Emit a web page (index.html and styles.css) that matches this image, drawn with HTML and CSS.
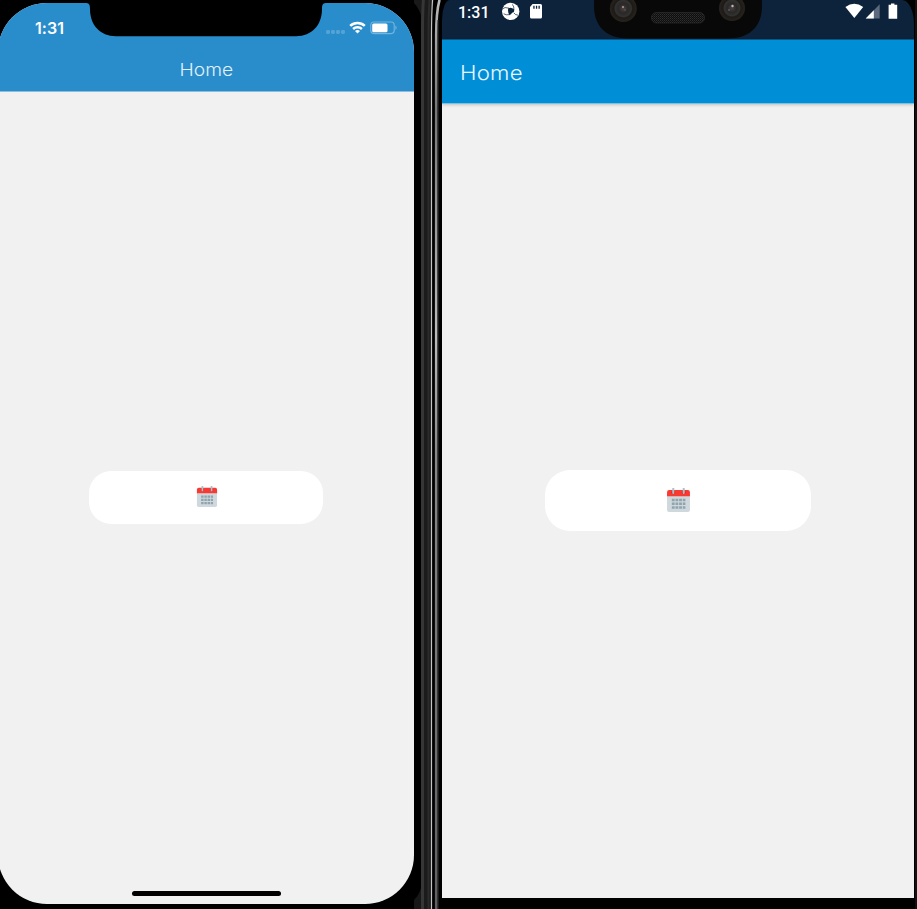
FILE: index.html
```
<!DOCTYPE html>
<html lang="en">
<head>
<meta charset="utf-8">
<title>Home</title>
<link rel="stylesheet" href="styles.css">
</head>
<body>
<svg class="symbols" width="0" height="0">
  <symbol id="calendar" viewBox="0 0 24 24">
    <path d="M1 6h22v15a2 2 0 0 1-2 2H3a2 2 0 0 1-2-2z" fill="#cfd8dc"/>
    <path d="M1 8V4a2 2 0 0 1 2-2h18a2 2 0 0 1 2 2v4z" fill="#f93a32"/>
    <circle cx="7" cy="4" r="1.8" fill="#c82828"/><circle cx="17" cy="4" r="1.8" fill="#c82828"/>
    <path d="M7 .8v4M17 .8v4" stroke="#b0bec5" stroke-width="2" stroke-linecap="round"/>
    <path d="M5.6 11.5h13M5.6 15.1h13M5.6 18.7h13" stroke="#90a4ae" stroke-width="2.5" stroke-dasharray="2.7 .8"/>
  </symbol>
</svg>
<main class="desktop">
  <section class="ios">
    <div class="ios-screen">
      <header class="ios-header">
        <div class="ios-status">
          <span class="ios-time">1:31</span>
          <svg class="ios-icons" width="73" height="16" viewBox="0 0 73 16">
            <g fill="#55a3d6"><rect x="0" y="11" width="4" height="4" rx="1.4"/><rect x="5" y="11" width="4" height="4" rx="1.4"/><rect x="10" y="11" width="4" height="4" rx="1.4"/><rect x="15" y="11" width="4" height="4" rx="1.4"/></g>
            <g fill="none" stroke="#fff" stroke-width="2.5"><path d="M24.2 6.9a10.6 10.6 0 0 1 14.6 0"/><path d="M27.1 10a6.4 6.4 0 0 1 8.8 0"/></g>
            <path d="M29 12q2.5-1.9 5 0l-2.5 2.6z" fill="#fff"/>
            <rect x="44.8" y="3" width="23.4" height="11.6" rx="3" fill="none" stroke="#74b5df" stroke-width="1.1"/>
            <rect x="46.2" y="4.6" width="15.3" height="8.6" rx="1.5" fill="#fff"/>
            <path d="M69.4 6.6q2.6 2.2 0 4.4z" fill="#74b5df"/>
          </svg>
        </div>
        <h1 class="ios-title">Home</h1>
      </header>
      <div class="ios-body"><button class="picker picker-ios" aria-label="Calendar"><svg class="cal-ios"><use href="#calendar"/></svg></button></div>
      <div class="home-bar"></div>
      <svg class="ios-notch" width="234" height="37" viewBox="0 0 234 37"><path d="M-4 0V3C0 3 1 4 1 9C1 25 11 36.2 27 36.2H207C223 36.2 233 25 233 9C233 4 234 3 238 3V0z"/></svg>
    </div>
  </section>
  <div class="bezel">
    <svg width="28" height="909" viewBox="0 0 28 909">
      <defs><linearGradient id="shine" x1="0" y1="0" x2="0" y2="909" gradientUnits="userSpaceOnUse"><stop offset="0" stop-color="#bbb"/><stop offset=".12" stop-color="#777"/><stop offset=".37" stop-color="#bbb"/><stop offset=".5" stop-color="#888"/><stop offset="1" stop-color="#606063"/></linearGradient></defs>
      <path d="M0 0H10Q7 12 7 30V909H0z" fill="#000"/>
      <path d="M0 0H10L8 18Q5 8 0 3z" fill="#191919"/>
      <path d="M9 0Q7 12 7 30V909H17V30Q17 12 20 0z" fill="#1b1b1b"/>
      <path d="M9.4 0Q8.5 12 8.5 30V909" fill="none" stroke="#363636" stroke-width="3"/>
      <path d="M15.5 0Q14.5 15 14.5 35V909" fill="none" stroke="#2b2b2b" stroke-width="2"/>
      <path d="M18.5 0Q17.5 15 17.5 35V909" fill="none" stroke="#c4c4c4" stroke-width="1.2"/>
      <path d="M25.5 0Q22.2 12 22.2 35V909" fill="none" stroke="url(#shine)" stroke-width="2.6"/>
      <path d="M24 20V909" stroke="#353535" stroke-width="1"/>
      <path d="M0 909V900Q5 895 7 888V909z" fill="#171717"/>
    </svg>
  </div>
  <section class="android">
    <div class="android-screen">
      <div class="android-status">
        <span class="android-time">1:31</span>
        <svg width="42" height="20" viewBox="0 0 42 20" fill="#fff">
          <circle cx="8.7" cy="9.4" r="8.7"/>
          <path d="M6.2 6.4Q9 4.6 12.2 7.4L12 10.2 7.4 13.2Q5.6 10 6.2 6.4z" fill="#0d233b"/>
          <path d="M0 7.2Q2.6 4.4 7 6.2M7.6 12.6Q4.6 13.4 1.6 11.8M11.8 8.2Q12.4 4.6 10.4 2.4M11.6 10.6Q13 13 16 13.2" fill="none" stroke="#0d233b" stroke-width=".7"/>
          <path d="M9.2 11.6l2.6-1.8-.4 2.8z"/>
          <path fill-rule="evenodd" d="M31.6 2h7.9a1.5 1.5 0 0 1 1.5 1.5v11.6a1.5 1.5 0 0 1-1.5 1.5h-9a1.5 1.5 0 0 1-1.5-1.5V5zM32.3 3.8v3h1.3v-3zm2.6 0v3h1.3v-3zm2.6 0v3h1.3v-3z" transform="translate(-1)"/>
        </svg>
        <svg class="android-icons" width="54" height="20" viewBox="0 0 54 20" fill="#fff">
          <path d="M.4 5Q9.3-1.3 18.2 5L9.3 16z"/>
          <path d="M20.7 16.5L34.7 2.2v14.3z" fill="#5b6b7d"/><path d="M20.7 16.5L28.8 8.3v8.2z"/>
          <path d="M46 1.5h3.4v1.3h2.8v13.9h-8.6V2.8H46z"/>
        </svg>
      </div>
      <header class="android-bar"><h1 class="android-title">Home</h1></header>
      <div class="android-body"><button class="picker picker-android" aria-label="Calendar"><svg class="cal-android"><use href="#calendar"/></svg></button></div>
      <svg class="android-notch" width="168" height="39" viewBox="0 0 168 39">
        <defs>
          <pattern id="mesh" width="2" height="2" patternUnits="userSpaceOnUse"><rect width="2" height="2" fill="#0d0d0d"/><rect width="1" height="1" fill="#303030"/><rect x="1" y="1" width="1" height="1" fill="#222"/></pattern>
          <radialGradient id="lens"><stop offset="0" stop-color="#4a4242"/><stop offset=".35" stop-color="#292727"/><stop offset=".6" stop-color="#343230"/><stop offset=".7" stop-color="#1c1a18"/><stop offset="1" stop-color="#29231c"/></radialGradient>
        </defs>
        <path d="M0 0H168V6C168 24 158 38.5 134 38.5H34C10 38.5 0 24 0 6z" fill="#080808"/>
        <circle cx="29.3" cy="8.5" r="13.5" fill="url(#lens)"/><circle cx="138" cy="8" r="13" fill="url(#lens)"/>
        <circle cx="29" cy="7" r="1.1" fill="#ad9494"/><circle cx="31" cy="10" r=".8" fill="#705555"/><circle cx="138.5" cy="6" r="1.2" fill="#bbb"/><circle cx="135" cy="10" r=".8" fill="#777"/>
        <rect x="57.5" y="12.5" width="53" height="10.5" rx="5" fill="url(#mesh)" stroke="#2a2a2a" stroke-width=".8"/>
      </svg>
    </div>
    <div class="android-chin"></div>
  </section>
  <div class="edge"></div>
</main>
</body>
</html>
```
FILE: styles.css
```
* { box-sizing: border-box; }
body { margin: 0; background: #000; overflow: hidden; font-family: Inter, "Liberation Sans", sans-serif; }
.symbols { display: block; height: 0; }
.desktop { display: grid; grid-template-columns: 414px 28px 472px 3px; width: 917px; height: 909px; }
h1 { margin: 0; font-weight: 300; line-height: 1; }
button { border: 0; padding: 0; }
svg { display: block; flex: none; }

.ios { padding-top: 3px; background: #000; overflow: hidden; }
.ios-screen { position: relative; display: flex; flex-direction: column; width: 416px; height: 901px; margin-left: -2px; border-radius: 49px; overflow: hidden; background: #f1f1f1; }
.ios-header { height: 89px; flex: none; background: #298ccb; border-bottom: 1px solid #8dbddd; }
.ios-status { display: flex; justify-content: space-between; height: 50px; padding: 16px 15px 0 37px; }
.ios-time { color: #fff; font-size: 16px; font-weight: 600; line-height: 18px; letter-spacing: .1px; }
.ios-title { width: max-content; margin: 8px auto 0; color: #e1f1fb; font-size: 17.5px; transform: scaleX(1.1); }
.ios-body { flex: 1; padding-top: 379px; }
.picker { display: flex; align-items: center; justify-content: center; margin: 0 auto; background: #fff; }
.picker-ios { width: 234px; height: 53px; border-radius: 22px; }
.cal-ios { width: 22px; height: 22px; margin: -1px 0 0 1px; }
.home-bar { width: 149px; height: 5px; margin: 0 auto 8px; border-radius: 3px; background: #000; flex: none; }
.ios-notch { position: absolute; left: 91px; top: -3px; overflow: visible; }

.android { display: flex; flex-direction: column; background: #000; }
.android-screen { position: relative; height: 898px; flex: none; display: flex; flex-direction: column; background: linear-gradient(#000 38px, #f1f1f1 38px); }
.android-status { display: flex; gap: 12px; height: 39px; padding: 2px 15px 0 16px; background: #0d233b; border-radius: 8px 12px 0 0 / 20px 24px 0 0; flex: none; }
.android-time { width: 32px; color: #fff; font: 500 16px/21px Roboto, sans-serif; }
.android-icons { margin-left: auto; }
.android-bar { display: flex; align-items: center; height: 65px; flex: none; padding: 2px 18px 0; background: #008ed6; border-top: 1px solid #065987; border-bottom: 1px solid #7fbfe1; box-shadow: 0 1px 3px #0003; }
.android-title { color: #e8f6ff; font-size: 20px; letter-spacing: .2px; transform: scaleX(1.11); transform-origin: left center; }
.android-body { flex: 1; padding-top: 366px; }
.picker-android { width: 266px; height: 61px; border-radius: 25px; }
.cal-android { width: 25px; height: 25px; }
.android-notch { position: absolute; left: 152px; top: 0; }
.android-chin { flex: 1; background: #000; }
.edge { background: linear-gradient(90deg, #000 1px, #111 1px); }
```
